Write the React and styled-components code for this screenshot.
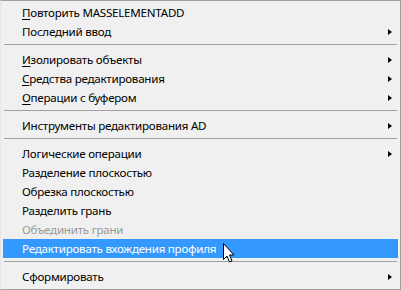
import React from "react";
import styled, { createGlobalStyle } from "styled-components";

const Global = createGlobalStyle`
  html, body { margin: 0; padding: 0; background: #f0f0f0; }
  body { font-family: "Noto Sans", "Segoe UI", sans-serif; }
`;

const Menu = styled.div`
  position: relative;
  box-sizing: border-box;
  width: 401px;
  height: 290px;
  background: #f0f0f0;
  border-top: 1px solid #a0a0a0;
  border-right: 1px solid #a0a0a0;
  border-bottom: 1px solid #a0a0a0;
  border-left: 1px solid #e6e6e6;
  padding: 2px 2px 3px 2px;
  display: flex;
  flex-direction: column;
`;

const Item = styled.div`
  height: 19px;
  display: flex;
  align-items: center;
  padding-left: 19px;
  padding-right: 6px;
  font-size: 11.6px;
  letter-spacing: -0.25px;
  color: ${(p) => (p.$disabled ? "#9a9a9a" : p.$active ? "#ffffff" : "#000000")};
  background: ${(p) => (p.$active ? "#3399ff" : "transparent")};
  white-space: nowrap;
`;

const Label = styled.span`
  flex: 1;
  line-height: 19px;
`;

const Acc = styled.span`
  text-decoration: underline;
  text-underline-offset: 2px;
`;

const Arrow = styled.span`
  width: 0;
  height: 0;
  border-top: 3.5px solid transparent;
  border-bottom: 3.5px solid transparent;
  border-left: 4px solid ${(p) => (p.$active ? "#fff" : "#000")};
`;

const Separator = styled.div`
  height: 1px;
  margin: 3px 1px 5px 1px;
  background: #a0a0a0;
`;

const Cursor = styled.svg`
  position: absolute;
  left: 221px;
  top: 241px;
`;

const rows = [
  { label: [<Acc key="a">П</Acc>, "овторить MASSELEMENTADD"] },
  { label: ["Последний ввод"], sub: true },
  { sep: true },
  { label: [<Acc key="a">И</Acc>, "золировать объекты"], sub: true },
  { label: [<Acc key="a">С</Acc>, "редства редактирования"], sub: true },
  { label: [<Acc key="a">О</Acc>, "перации с буфером"], sub: true },
  { sep: true },
  { label: ["Инструменты редактирования AD"], sub: true },
  { sep: true },
  { label: ["Логические операции"], sub: true },
  { label: ["Разделение плоскостью"] },
  { label: ["Обрезка плоскостью"] },
  { label: ["Разделить грань"] },
  { label: ["Объединить грани"], disabled: true },
  { label: ["Редактировать вхождения профиля"], active: true },
  { sep: true },
  { label: ["Сформировать"], sub: true },
];

export default function App() {
  return (
    <>
      <Global />
      <Menu>
        {rows.map((r, i) =>
          r.sep ? (
            <Separator key={i} />
          ) : (
            <Item key={i} $active={r.active} $disabled={r.disabled}>
              <Label>{r.label}</Label>
              {r.sub && <Arrow $active={r.active} />}
            </Item>
          )
        )}
        <Cursor width="13" height="22" viewBox="0 0 13 22">
          <path
            d="M1.5 1.5 L1.5 17.5 L5 14 L7.5 20 L10 19 L7.5 13 L12 13 Z"
            fill="#fff"
            stroke="#000"
            strokeWidth="1"
            strokeLinejoin="miter"
          />
        </Cursor>
      </Menu>
    </>
  );
}
